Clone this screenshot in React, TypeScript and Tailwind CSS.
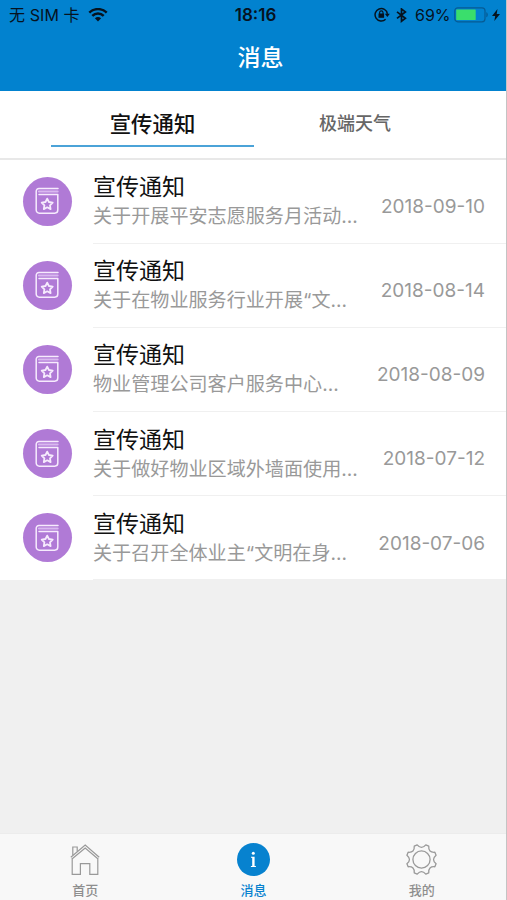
type Notice = { title: string; summary: string; date: string };

const notices: Notice[] = [
  { title: '宣传通知', summary: '关于开展平安志愿服务月活动...', date: '2018-09-10' },
  { title: '宣传通知', summary: '关于在物业服务行业开展“文...', date: '2018-08-14' },
  { title: '宣传通知', summary: '物业管理公司客户服务中心...', date: '2018-08-09' },
  { title: '宣传通知', summary: '关于做好物业区域外墙面使用...', date: '2018-07-12' },
  { title: '宣传通知', summary: '关于召开全体业主“文明在身...', date: '2018-07-06' },
];

// eight-toothed outline, centred on 0,0
function gearPath(teeth: number, tip: number, valley: number) {
  const at = (deg: number, r: number) => {
    const a = (deg * Math.PI) / 180;
    return `${(Math.cos(a) * r).toFixed(2)} ${(Math.sin(a) * r).toFixed(2)}`;
  };
  const step = 360 / teeth;
  let d = `M${at(step / 2 - 6, tip)}`;
  for (let i = 0; i < teeth; i++) {
    const a = step / 2 + i * step;
    d += `L${at(a + 6, tip)}Q${at(a + step / 2, valley)} ${at(a + step - 6, tip)}`;
  }
  return d + 'Z';
}

function WifiIcon() {
  return (
    <svg className="h-[15px] w-5" viewBox="0 0 20 15" fill="none" stroke="#06131f" strokeWidth="2.5">
      <path d="M1.3 4.6a12.6 12.6 0 0 1 17.4 0" />
      <path d="M4.3 7.8a8.2 8.2 0 0 1 11.4 0" />
      <path d="M6.9 10.3a4.6 4.6 0 0 1 6.2 0L10 13.4z" fill="#06131f" stroke="none" />
    </svg>
  );
}

function StatusBar() {
  return (
    <div className="grid h-[30px] grid-cols-[1fr_auto_1fr] items-center text-[16px] leading-[30px] text-[#06131f]">
      <div className="flex items-center pl-[9px]">
        <span className="w-[79px] whitespace-nowrap tracking-[0.1px]">无 SIM 卡</span>
        <WifiIcon />
      </div>
      <span className="pl-[5px] text-[17px] font-semibold">18:16</span>
      <div className="flex items-center justify-end pr-[5px]">
        <svg className="h-4 w-4" viewBox="0 0 16 16" fill="none" stroke="#06131f" strokeWidth="1.5">
          <path d="M11.6 12.2A6.2 6.2 0 1 1 13.4 6.8" />
          <path d="M10.8 6.8h5l-2.4 3.2z" fill="#06131f" stroke="none" />
          <rect x="4.5" y="6.5" width="5.6" height="4.3" fill="#06131f" stroke="none" />
          <path d="M5.6 6.9V5.6a1.7 1.7 0 0 1 3.4 0v1.3" strokeWidth="1.1" />
        </svg>
        <svg className="ml-[6px] h-[15px] w-[11px]" viewBox="0 0 11 15" fill="none" stroke="#06131f" strokeWidth="1.7">
          <path d="M1 3.8l8.4 6.5L5.5 13.2V1l3.9 2.9L1 10.4" />
        </svg>
        <span className="ml-[8px] w-[40px] whitespace-nowrap text-[16px]">69%</span>
        <svg className="-ml-px h-4 w-[35px]" viewBox="0 0 35 16">
          <rect x="0.8" y="0.8" width="30.2" height="14" rx="3" fill="none" stroke="#075b94" strokeWidth="1.2" />
          <rect x="2.2" y="2.6" width="19.5" height="10.4" rx="0.5" fill="#3ade6c" />
          <path d="M32.3 5.3c2 .5 2 4.5 0 5z" fill="#075b94" />
        </svg>
        <svg className="ml-[3px] mr-px h-3 w-2" viewBox="0 0 8 12" fill="#06131f">
          <path d="M5.5 0L0 6.9h3.2L2.3 12 8 4.9H4.7z" />
        </svg>
      </div>
    </div>
  );
}

function BookIcon() {
  return (
    <span className="flex size-[49px] shrink-0 items-center justify-center rounded-full bg-[#b07ad6]">
      <svg className="mr-px h-[28px] w-[24px]" viewBox="0 0 24 28" fill="none" stroke="#f6ebfd" strokeWidth="1.5" strokeLinecap="round" strokeLinejoin="round">
        <path d="M23 1.4H4A2.8 2.8 0 0 0 1.2 4.2v18.9A3.1 3.1 0 0 0 4.3 26.2h15.4a3.1 3.1 0 0 0 3.1-3.1V7.6H4" />
        <path d="M4 4.5h18.6" stroke="#d9b8ef" strokeWidth="2.2" />
        <path d="M12.2 11.6l1.7 3.4 3.8.6-2.7 2.7.6 3.8-3.4-1.8-3.4 1.8.6-3.8-2.7-2.7 3.8-.6z" strokeWidth="1.8" />
      </svg>
    </span>
  );
}

function NoticeRow({ notice }: { notice: Notice }) {
  return (
    <li className="flex h-[84.2px] pl-[23px]">
      <div className="pt-[17px]">
        <BookIcon />
      </div>
      <div className="ml-[21px] flex flex-1 justify-between border-b border-[#f0f0f0] pr-[21px]">
        <div className="w-[270px] pt-[13.5px]">
          <h2 className="text-[23px] leading-[29px] text-[#111]">{notice.title}</h2>
          <p className="whitespace-nowrap text-[19.1px] leading-[28px] text-[#999]">{notice.summary}</p>
        </div>
        <time className="whitespace-nowrap pt-[34.3px] text-[19px] leading-[26px] text-[#999]">{notice.date}</time>
      </div>
    </li>
  );
}

function TabBar() {
  return (
    <nav className="grid h-[67px] grid-cols-3 border-t border-[#ececec] bg-[#f8f8f8] pl-px text-[13px] font-medium leading-[18px] text-[#8e8e8e]">
      <a className="flex flex-col items-center pt-[9px]">
        <svg className="h-[33px] w-[32px]" viewBox="0 0 32 33" fill="none" stroke="#999" strokeWidth="1.2">
          <path d="M1.8 14.2L16.2 2l14 12.2M3.2 15.8L16.2 5l12.6 10.8" />
          <path d="M3.2 15v16.4h8.2V20.6h9.4v10.8h8V15M3.8 12.2V4h4.4v4.6" />
        </svg>
        <span className="mt-[5px]">首页</span>
      </a>
      <a className="flex flex-col items-center pt-[9px] text-[#0782cf]">
        <svg className="size-[33px]" viewBox="0 0 33 33">
          <circle cx="16.5" cy="16.5" r="16.5" fill="#0782cf" />
          <circle cx="16.3" cy="10.3" r="1.5" fill="#fff" />
          <path d="M14 13.8h3.6v9.2h1.3v1h-5v-1h1.3v-8.2H14z" fill="#fff" />
        </svg>
        <span className="mt-[5px]">消息</span>
      </a>
      <a className="flex flex-col items-center pt-[9px]">
        <svg className="size-[33px]" viewBox="-16.5 -16.5 33 33" fill="none" stroke="#999" strokeWidth="1.3" strokeLinejoin="round">
          <path d={gearPath(8, 15.2, 9.5)} />
          <circle r="8.6" />
        </svg>
        <span className="mt-[5px]">我的</span>
      </a>
    </nav>
  );
}

export default function App() {
  return (
    <div className="flex h-[900px] w-[507px] flex-col overflow-hidden border-r border-[#c4c4c4] bg-[#f0f0f0] font-['Inter','Noto_Sans_CJK_SC',sans-serif]">
      <header className="h-[91px] shrink-0 bg-[#0282cf]">
        <StatusBar />
        <h1 className="pl-[15px] pt-[12px] text-center text-[23px] font-medium leading-[32px] text-white">消息</h1>
      </header>
      <div className="flex h-[68.5px] shrink-0 border-b-2 border-[#e8e8e8] bg-white pl-[51px] text-center">
        <button className="h-[56px] w-[203px] border-b-2 border-[#4ba3d8] text-[21.4px] font-medium leading-[67px] text-[#111]">宣传通知</button>
        <button className="h-[56px] w-[202px] text-[18px] font-medium leading-[66px] text-[#666]">极端天气</button>
      </div>
      <ul className="bg-white">
        {notices.map((notice) => (
          <NoticeRow key={notice.date} notice={notice} />
        ))}
      </ul>
      <div className="flex-1" />
      <TabBar />
    </div>
  );
}
